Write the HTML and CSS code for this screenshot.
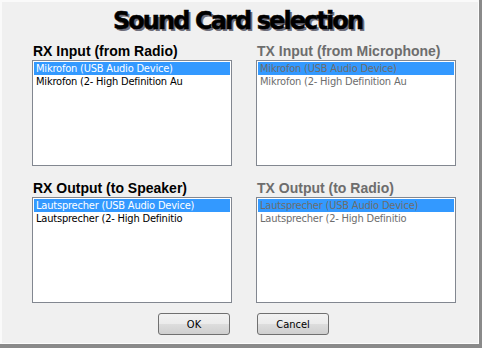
FILE: index.html
```html
<!DOCTYPE html>
<html>
<head>
<meta charset="utf-8">
<link rel="stylesheet" href="styles.css">
</head>
<body>
<div class="window">
  <h1 class="title">Sound Card selection</h1>
  <div class="grid">
    <div class="group">
      <div class="label">RX Input (from Radio)</div>
      <div class="list">
        <div class="item sel">Mikrofon (USB Audio Device)</div>
        <div class="item">Mikrofon (2- High Definition Au</div>
      </div>
    </div>
    <div class="group disabled">
      <div class="label">TX Input (from Microphone)</div>
      <div class="list">
        <div class="item sel">Mikrofon (USB Audio Device)</div>
        <div class="item">Mikrofon (2- High Definition Au</div>
      </div>
    </div>
    <div class="group">
      <div class="label">RX Output (to Speaker)</div>
      <div class="list">
        <div class="item sel">Lautsprecher (USB Audio Device)</div>
        <div class="item">Lautsprecher (2- High Definitio</div>
      </div>
    </div>
    <div class="group disabled">
      <div class="label">TX Output (to Radio)</div>
      <div class="list">
        <div class="item sel">Lautsprecher (USB Audio Device)</div>
        <div class="item">Lautsprecher (2- High Definitio</div>
      </div>
    </div>
  </div>
  <div class="buttons">
    <button class="btn">OK</button>
    <button class="btn">Cancel</button>
  </div>
</div>
</body>
</html>
```
FILE: styles.css
```css
html, body {
  margin: 0;
  padding: 0;
  background: #f0f0f0;
}
.window {
  width: 482px;
  height: 348px;
  box-sizing: border-box;
  background: #f0f0f0;
  border-right: 3px solid #8a8a8a;
  border-bottom: 4px solid #8a8a8a;
  box-shadow: inset 2px 2px 0 #fafafa, inset -1px -1px 0 #fcfcfc;
  font-family: "Liberation Sans", Arial, sans-serif;
  display: flex;
  flex-direction: column;
}
.title {
  margin: 7px 0 0 0;
  font-family: "DejaVu Sans", "Liberation Sans", sans-serif;
  font-weight: bold;
  font-size: 24px;
  line-height: 28px;
  text-align: center;
  color: #000;
  text-shadow: 2px 2px 0 #6e6e7a;
  letter-spacing: -1.9px;
  -webkit-text-stroke: 0.5px #000;
  padding-right: 4px;
}
.grid {
  display: grid;
  grid-template-columns: 200px 200px;
  column-gap: 24px;
  row-gap: 14px;
  padding-left: 32px;
  margin-top: 8px;
}
.label {
  font-weight: bold;
  font-size: 14px;
  line-height: 17px;
  padding-left: 1px;
  color: #000;
}
.disabled .label {
  color: #6d6d6d;
}
.list {
  height: 106px;
  box-sizing: border-box;
  border: 1px solid #828790;
  background: #fff;
  padding: 1px;
}
.item {
  font-family: "DejaVu Sans Condensed", "DejaVu Sans", sans-serif;
  font-size: 11px;
  letter-spacing: -0.2px;
  line-height: 13px;
  height: 13px;
  padding-left: 2px;
  color: #000;
  white-space: nowrap;
  overflow: hidden;
}
.item.sel {
  background: #3399ff;
  color: #fff;
}
.disabled .item {
  color: #6d6d6d;
}
.disabled .item.sel {
  color: #6d6d6d;
}
.buttons {
  display: flex;
  gap: 27px;
  padding-left: 158px;
  margin-top: 10px;
}
.btn {
  width: 72px;
  height: 22px;
  box-sizing: border-box;
  border: 1px solid #707070;
  border-radius: 3px;
  background: linear-gradient(#f2f2f2 0%, #ebebeb 50%, #dddddd 51%, #cfcfcf 100%);
  font-family: "DejaVu Sans Condensed", "DejaVu Sans", sans-serif;
  font-size: 11px;
  color: #000;
  padding: 0;
}
```
